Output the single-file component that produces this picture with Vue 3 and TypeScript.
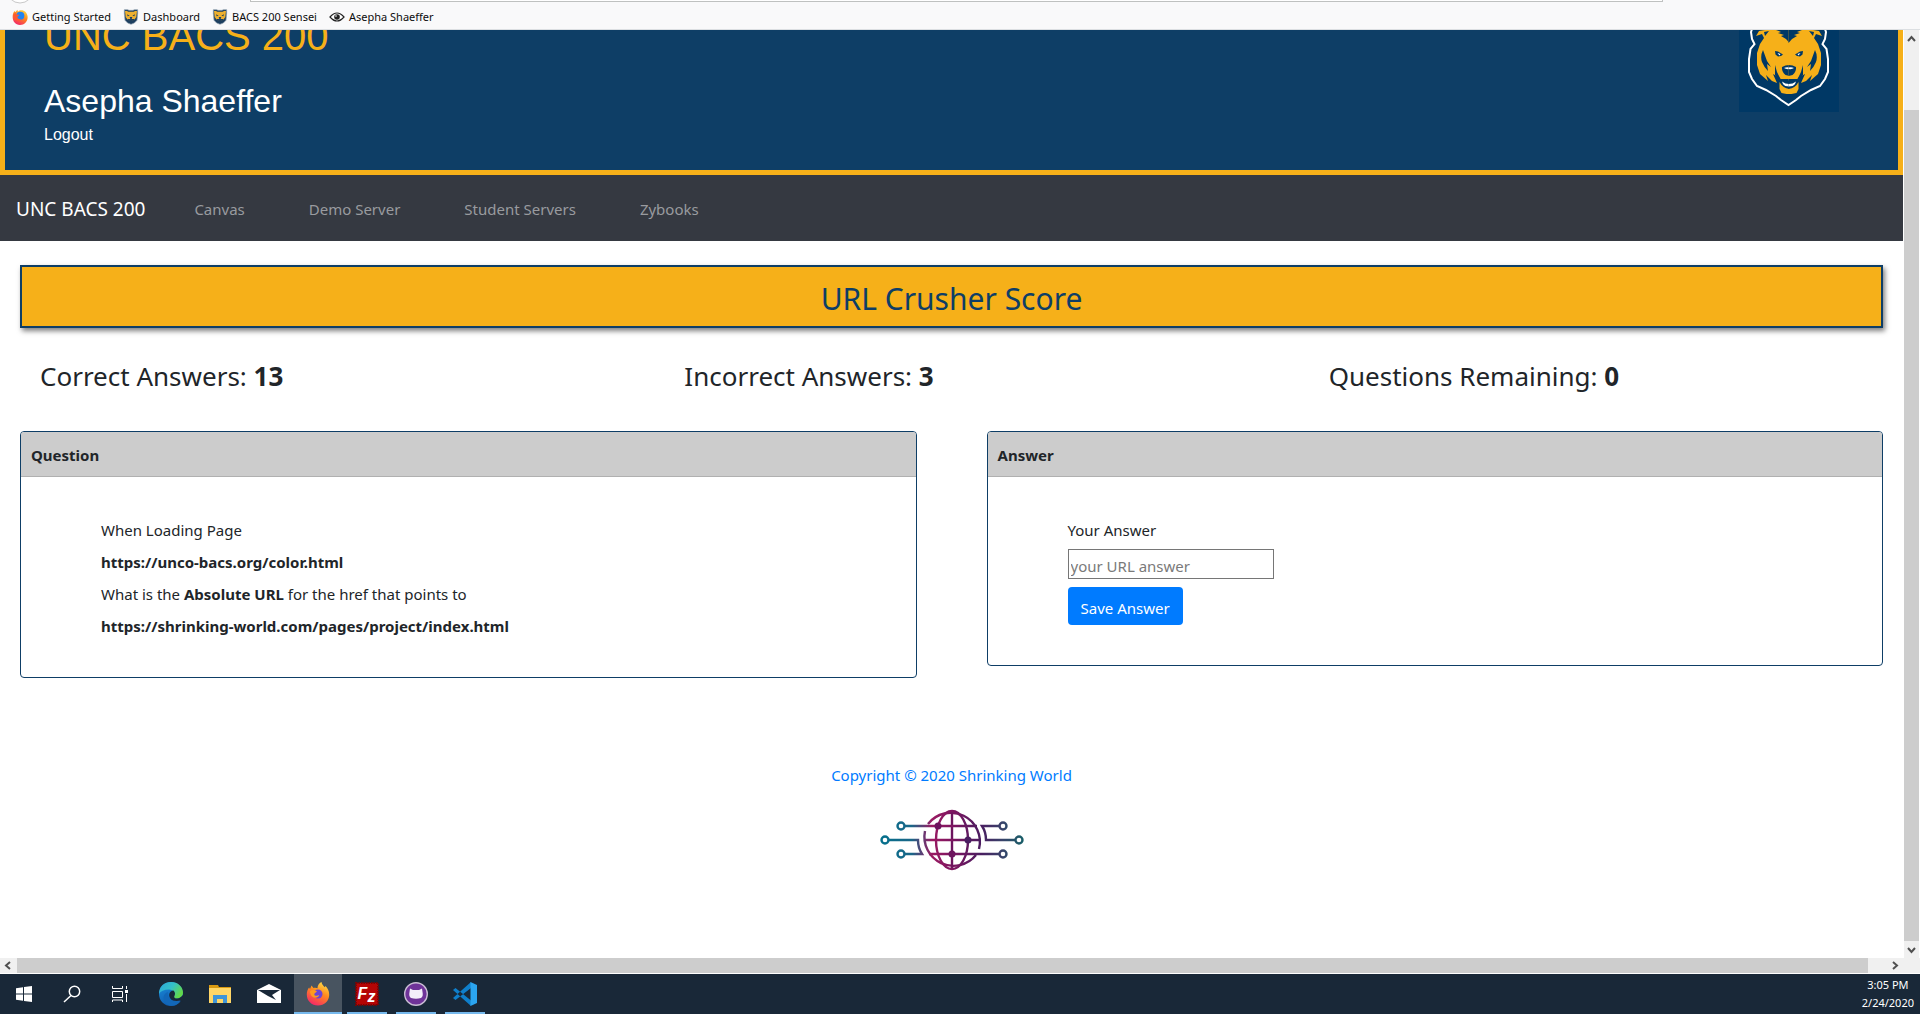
<script setup lang="ts">
import { ref } from 'vue'

interface Bookmark {
  label: string
  icon: 'firefox' | 'bear' | 'eye'
}

interface Stat {
  label: string
  value: number
}

const bookmarks: Bookmark[] = [
  { label: 'Getting Started', icon: 'firefox' },
  { label: 'Dashboard', icon: 'bear' },
  { label: 'BACS 200 Sensei', icon: 'bear' },
  { label: 'Asepha Shaeffer', icon: 'eye' },
]

const navLinks: string[] = ['Canvas', 'Demo Server', 'Student Servers', 'Zybooks']

const stats: Stat[] = [
  { label: 'Correct Answers:', value: 13 },
  { label: 'Incorrect Answers:', value: 3 },
  { label: 'Questions Remaining:', value: 0 },
]

const answer = ref('')
</script>

<template>
  <div class="desktop">
    <svg class="defs" aria-hidden="true">
      <defs>
        <linearGradient id="fox" x1="0.8" y1="0" x2="0.3" y2="1">
          <stop offset="0" stop-color="#ffe14a" />
          <stop offset="0.45" stop-color="#ff8a1c" />
          <stop offset="1" stop-color="#f4256a" />
        </linearGradient>
        <linearGradient id="edgeTop" x1="0" y1="0" x2="1" y2="0.5">
          <stop offset="0" stop-color="#2aa5dc" />
          <stop offset="0.55" stop-color="#35c1c8" />
          <stop offset="1" stop-color="#62d84a" />
        </linearGradient>
        <linearGradient id="edgeLow" x1="0" y1="0" x2="0.4" y2="1">
          <stop offset="0" stop-color="#1b8fdd" />
          <stop offset="1" stop-color="#0f5cb0" />
        </linearGradient>
        <linearGradient id="net" gradientUnits="userSpaceOnUse" x1="0" y1="0" x2="144" y2="0">
          <stop offset="0" stop-color="#04708c" />
          <stop offset="0.22" stop-color="#1a6688" />
          <stop offset="0.36" stop-color="#9a1a62" />
          <stop offset="0.52" stop-color="#7a1560" />
          <stop offset="0.7" stop-color="#4a1d60" />
          <stop offset="0.85" stop-color="#38436a" />
          <stop offset="1" stop-color="#175f68" />
        </linearGradient>
        <g id="halfBear">
          <path fill="#f6b019" d="M50.500 10H28l-2 8-6 1-3 5 6-2 2 4-4 6-3 9v12l3 9 8 7-2-6 6 6 5 2-4-9 7 4 2 3h7.500z" />
          <path fill="#003865" d="M24 38q-3 6-1 12 2 5 6 9l-1-7 4 3-4-6zM37 18l5 2-3 1 6 2-3 1 5 3 3.500 4V17l-3-3-4 4zM36 39l3 .5 5 3-2 1.500-3 .5-2.500-2zM43 55q3-2 7.500-2v11l-4-1q-4-3-3.500-8zM41 67h9.500v3H42zM25 20l5-1-4 5zM36 53l2 7 3 6v3l-5-6z" />
          <path fill="#003865" d="M40.500 68h10v9q-6 0-10-9z" />
          <path fill="#f6b019" d="M40.500 70q3 6 10 7v5h-3l-5-1-2-4z" />
          <path fill="#fff" d="M43 69.500q3 2.500 7.500 2.500v2.500q-5 0-6.500-2.500zM45 56q2 1.500 5.500 1v-1.500q-3-.8-5.500.5zM38.500 41l3 1-1 1.500z" />
        </g>
        <g id="bear">
          <path d="M14 14l-2 6 1 7 2.500 5-4 5-1.500 10v13l3 7 5 7 9 4 10 6 5 4 7.500 5 7.500-5 5-4 10-6 9-4 5-7 3-7V47l-1.500-10-4-5 2.500-5 1-7-2-6q-3-8-12-5l-8 3H35l-8-3q-9-3-13 5z" fill="#003865" stroke="#fff" stroke-width="2" />
          <use href="#halfBear" />
          <use href="#halfBear" transform="translate(100 0) scale(-1 1)" />
        </g>
        <g id="firefox">
          <path fill="url(#fox)" d="M12 23.500C5.500 23.500.8 18.800.8 12.500c0-3 1-5.500 2.300-7L4 7l1.500-3.500L7.500 6c1.500-.5 3-.3 4 .3C11.500 3.500 13 1 15.500 0c.3 2.500 2 3.800 3.300 5.300l.7-1.300c2.200 2.300 3.700 5 3.700 8.700 0 6.300-4.900 10.800-11.200 10.800z" />
          <circle cx="12" cy="12" r="4.500" fill="#6b45d6" />
          <path fill="#ff9a1f" d="M4 9c2-1.500 5-1.300 7 .5l-2.200 1.700c-1 .8-.5 2.500 1 2.600 1.500.1 2.300-.6 3.400-.6-.7 2.300-4.200 3.400-6.700 1.600C4.800 13.500 4 11.500 4 9z" />
        </g>
      </defs>
    </svg>

    <header class="browser-bar">
      <svg class="toolbar-edge" height="4" aria-hidden="true">
        <circle cx="20" cy="-10" r="13" fill="#fff" stroke="#c8c8c8" />
      </svg>
      <span class="address-edge"></span>
      <nav class="bookmarks" aria-label="Bookmarks">
        <a v-for="b in bookmarks" :key="b.label" href="#" class="bookmark">
          <svg v-if="b.icon === 'firefox'" width="16" height="16" viewBox="0 0 24 24">
            <path fill="url(#fox)" d="M12 24C5 24 1 18.500 1 12c0-4 1-7 3-9l1 2 3-4 1 3c5-5 14-1 14.500 8C23.500 19 18.500 24 12 24z" />
            <circle cx="12.500" cy="10" r="6" fill="#2384f0" />
            <path fill="#ff5a30" d="M2 9l3-4 1 3 5 1-3 3q0 4 6 3-3 4-8 2-4-1-4-8z" />
          </svg>
          <svg v-else-if="b.icon === 'bear'" width="16" height="16" viewBox="0 0 24 24">
            <path fill="#1d3f60" stroke="#8fa0ae" stroke-width="1" d="M2 1h5l2 1h6l2-1h5v6l-1 10-4 4-5 2-5-2-4-4L2 7z" />
            <path fill="#eeb02e" d="M3 3h3l2 1h8l2-1h3l-1 9-3 4-2 1H9l-2-1-3-4z" />
            <path fill="#1d3f60" d="M6 8l4 2-3 1zM18 8l-4 2 3 1zM10 12h4l-1 3h-2zM7 15h10v2l-5 1-5-1z" />
          </svg>
          <svg v-else width="16" height="16" viewBox="0 0 16 16">
            <path fill="#fff" stroke="#222" stroke-width="1.200" d="M1 8q7-8 14 0-7 8-14 0z" />
            <circle cx="8" cy="8" r="2.800" fill="#222" />
            <circle cx="7" cy="7" r="1" fill="#aaa" />
          </svg>
          <span>{{ b.label }}</span>
        </a>
      </nav>
    </header>

    <div class="window">
      <main class="page">
        <section class="masthead">
          <div>
            <h1>UNC BACS 200</h1>
            <h2>Asepha Shaeffer</h2>
            <a href="#" class="logout">Logout</a>
          </div>
          <svg class="logo" width="100" height="100" viewBox="0 0 100 100" role="img" aria-label="UNC Bears">
            <rect width="100" height="100" fill="#003865" />
            <use href="#bear" />
          </svg>
        </section>

        <nav class="navbar" aria-label="Course">
          <a href="#" class="brand">UNC BACS 200</a>
          <a v-for="link in navLinks" :key="link" href="#" class="nav-link">{{ link }}</a>
        </nav>

        <div class="content">
          <h2 class="banner">URL Crusher Score</h2>

          <div class="stats">
            <div v-for="s in stats" :key="s.label" class="stat">
              {{ s.label }} <strong>{{ s.value }}</strong>
            </div>
          </div>

          <div class="cards">
            <section class="card">
              <h3 class="card-title">Question</h3>
              <div class="card-body">
                <p>When Loading Page</p>
                <p><strong>https://unco-bacs.org/color.html</strong></p>
                <p>What is the <strong>Absolute URL</strong> for the href that points to</p>
                <p><strong>https://shrinking-world.com/pages/project/index.html</strong></p>
              </div>
            </section>

            <section class="card">
              <h3 class="card-title">Answer</h3>
              <form class="card-body" @submit.prevent>
                <label for="answer">Your Answer</label>
                <input id="answer" v-model="answer" type="text" placeholder="your URL answer" />
                <button type="submit">Save Answer</button>
              </form>
            </section>
          </div>
        </div>

        <footer class="footer">
          <a href="#">Copyright © 2020 Shrinking World</a>
          <svg width="144" height="64" viewBox="0 0 144 64" fill="none" stroke="url(#net)" stroke-width="2.400" role="img" aria-label="Shrinking World">
            <path d="M48 16a29 29 0 0 1 51 25M96 47a29 29 0 0 1-51-24" />
            <path d="M72 3v58" stroke="#6d145e" />
            <ellipse cx="72" cy="32" rx="16" ry="29" />
            <path d="M25 18.010H97M44 32.010h56M49 46.010h70" />
            <path d="M9 32.010H38q0 8 4 14H25M119 18.010h-17q4 6 4 14h29" />
            <g fill="#fff">
              <circle cx="21" cy="18" r="3.500" /><circle cx="5" cy="32" r="3.500" /><circle cx="21" cy="46" r="3.500" />
              <circle cx="123" cy="18" r="3.500" /><circle cx="139" cy="32" r="3.500" /><circle cx="123" cy="46" r="3.500" />
            </g>
            <g stroke="none">
              <circle cx="58" cy="18" r="3.500" fill="#6d145e" /><circle cx="88" cy="32" r="3.500" fill="#4a1d60" /><circle cx="72" cy="46" r="3.500" fill="#6d145e" />
            </g>
          </svg>
        </footer>
      </main>

      <div class="scroll-y" aria-hidden="true">
        <svg width="15" height="17" viewBox="0 0 15 17"><path d="M4 11l3.500-4L11 11" /></svg>
        <span class="thumb-y"></span>
        <svg width="15" height="17" viewBox="0 0 15 17"><path d="M4 7l3.500 4L11 7" /></svg>
      </div>
    </div>

    <div class="scroll-x" aria-hidden="true">
      <svg width="17" height="15" viewBox="0 0 17 15"><path d="M10 4L6 7.500 10 11" /></svg>
      <span class="thumb-x"></span>
      <svg width="17" height="15" viewBox="0 0 17 15"><path d="M7 4l4 3.500L7 11" /></svg>
    </div>

    <footer class="taskbar">
      <div class="tasks">
        <button type="button" aria-label="Start">
          <svg viewBox="0 0 24 24" fill="#fff"><path d="M4 6.200l7-1v6.300H4zM12 5l8-1v7.500h-8zM4 12.500h7v6.300l-7-1zM12 12.500h8V20l-8-1z" /></svg>
        </button>
        <button type="button" aria-label="Search">
          <svg viewBox="0 0 24 24" fill="none" stroke="#fff" stroke-width="1.500"><circle cx="14.500" cy="9.500" r="5.200" /><path d="M11 13.500L4 20" /></svg>
        </button>
        <button type="button" aria-label="Task View">
          <svg viewBox="0 0 24 24" fill="none" stroke="#fff"><path d="M4.500 4v2.500h10V4M4.500 9.500h10v6h-10zM4.500 20v-2h10v2M18.500 4v3M18.500 12v8" /><path fill="#fff" stroke="none" d="M17 8h3v3h-3z" /></svg>
        </button>
        <button type="button" class="first-app" aria-label="Edge">
          <svg viewBox="0 0 24 24">
            <circle cx="12" cy="12" r="12" fill="url(#edgeLow)" />
            <path fill="url(#edgeTop)" d="M0 12C0 4 5.500 0 12 0c7 0 12 5 12 10.500 0 4-3 6-6.500 6-3 0-3.500-1-2.500-2.500 1.500-3-1-6.500-5-6.500-5 0-8.500 1.500-10 4.500z" />
            <path fill="#192838" d="M14.500 8.500c2 2 1.800 4 .8 5.700-.8 1.300 1 2.500 3 2.300 2-.2 3.700-1.200 5.700-3.500V19l-3.500.5c-3 1-7.500 0-9.500-3.500-2-4 0-7 3.500-7.500z" />
            <path fill="#1267b8" d="M9 10c-1.500 5 3 10.500 12.500 8.500C17 26 8 25 5 19 3.500 14 6 10.500 9 10z" />
          </svg>
        </button>
        <button type="button" aria-label="File Explorer">
          <svg viewBox="0 0 24 24"><path fill="#d99a12" d="M1 3h9l1 2h12v5H1z" /><path fill="#ffd667" d="M1 6h22v15H1z" /><path fill="#3f95d8" d="M5 13h14v8h-4v-4H9v4H5z" /></svg>
        </button>
        <button type="button" aria-label="Mail">
          <svg viewBox="0 0 24 24"><path fill="#fff" d="M0 8l12-6 12 6v13H0z" /><path fill="#192838" d="M1 8h22l-8 5 4 5-8-4z" /></svg>
        </button>
        <button type="button" class="active" aria-label="Firefox">
          <svg viewBox="0 0 24 24"><use href="#firefox" /></svg>
        </button>
        <button type="button" class="running" aria-label="FileZilla">
          <svg viewBox="0 0 24 24">
            <rect x="1" y="1" width="22" height="22" fill="#b50505" stroke="#7c0303" stroke-width="2" stroke-dasharray="1.500 1" />
            <text x="11.500" y="17" text-anchor="middle" class="fz">F<tspan dy="3">z</tspan></text>
          </svg>
        </button>
        <button type="button" class="running" aria-label="GitHub Desktop">
          <svg viewBox="0 0 24 24"><circle cx="12" cy="12" r="11.300" fill="#6f3399" stroke="#c9bdd4" stroke-width="1.400" /><path fill="#f3effa" d="M6 6.500l3 1.500h6l3-1.500.5 3.500q1 4.500-1.500 6-5 1.500-10 0-2.500-1.500-1.500-6z" /></svg>
        </button>
        <button type="button" class="running" aria-label="Visual Studio Code">
          <svg viewBox="0 0 24 24"><path fill="#0f7fcb" d="M0 8l2.500-2L18 18.500V24zM0 16l2.500 2L18 6V0z" /><path fill="#2ba5f0" d="M17.500 0L24 3v18l-6.500 3z" /></svg>
        </button>
      </div>
      <div class="clock"><span>3:05 PM</span><span>2/24/2020</span></div>
    </footer>
  </div>
</template>

<style>
body {
  margin: 0;
}
</style>

<style scoped>
.desktop {
  display: flex;
  flex-direction: column;
  height: 100vh;
  overflow: hidden;
  background: #fff;
  color: #212529;
  font: 15px/32px "Noto Sans", "Open Sans", sans-serif;
}
.desktop * {
  box-sizing: border-box;
}
.defs {
  position: absolute;
  width: 0;
  height: 0;
}
h1,
h2,
h3,
p {
  margin: 0;
  font-weight: 400;
}
a {
  text-decoration: none;
}

.browser-bar {
  position: relative;
  flex: none;
  height: 30px;
  padding: 8px 12px 0;
  background: #f9f9fa;
  border-bottom: 1px solid #dcdfe2;
}
.toolbar-edge {
  position: absolute;
  left: 0;
  top: 0;
  width: 60px;
}
.address-edge {
  position: absolute;
  left: 250px;
  right: 257px;
  top: 0;
  height: 2px;
  background: #fff;
  border: 1px solid #bfc1c0;
  border-top: 0;
}
.bookmarks {
  display: flex;
  gap: 12px;
}
.bookmark {
  display: flex;
  align-items: center;
  gap: 4px;
  height: 18px;
  color: #0c0c0d;
  font-size: 11px;
  line-height: 18px;
}

.window {
  flex: 1;
  min-height: 0;
  display: flex;
}
.page {
  flex: 1;
  min-width: 0;
  overflow: hidden;
}
.masthead {
  display: flex;
  justify-content: space-between;
  margin-top: -47px;
  padding: 24px 59px 23px 39px;
  background: #0e3e66;
  border: 5px solid #f6b019;
  font-family: "Liberation Sans", Arial, sans-serif;
  color: #fff;
}
.masthead h1 {
  margin-bottom: 22px;
  color: #f6b019;
  font-size: 40px;
  line-height: 48px;
}
.masthead h2 {
  margin-bottom: 3px;
  font-size: 32px;
  line-height: 38px;
}
.logout {
  display: block;
  color: #fff;
  font-size: 16px;
  line-height: 24px;
}
.logo {
  flex: none;
}

.navbar {
  display: flex;
  align-items: center;
  gap: 64px;
  height: 66px;
  padding: 2px 16px 0;
  background: #353941;
}
.brand {
  margin-right: -15px;
  color: #fff;
  font-size: 19px;
}
.nav-link {
  color: #999b9f;
}

.content {
  padding: 24px 20px 0;
}
.banner {
  padding: 10px 8px 6px;
  background: #f6b019;
  border: 2px solid #0e3e66;
  box-shadow: 2px 3px 5px rgba(0, 0, 0, 0.5);
  color: #0e3e66;
  font-size: 30px;
  line-height: 43px;
  text-align: center;
}
.stats {
  display: grid;
  grid-template-columns: repeat(3, 1fr);
  gap: 70px;
  padding: 28px 0 35px 20px;
  margin-right: -20px;
  font-size: 26px;
  line-height: 40px;
}
.cards {
  display: flex;
  align-items: flex-start;
  gap: 70px;
}
.card {
  flex: 1;
  border: 1px solid #0e3e66;
  border-radius: 4px;
  overflow: hidden;
}
.card-title {
  padding: 7px 10px 5px;
  background: #ccc;
  border-bottom: 1px solid #b0b0b0;
  font-size: 15px;
  font-weight: 700;
}
.card-body {
  padding: 37px 80px 35px;
}
.card-body label,
.card-body input,
.card-body button {
  display: block;
}
.card-body input {
  width: 206px;
  height: 30px;
  margin: 3px 0 8px;
  padding: 3px 2px 0;
  border: 1px solid #767676;
  border-radius: 0;
  color: #212529;
  font: inherit;
  line-height: 24px;
}
.card-body input::placeholder {
  color: #7a7a7a;
}
.card-body button {
  height: 38px;
  margin-bottom: 5px;
  padding: 3px 13px 0;
  background: #007bff;
  border: 0;
  border-radius: 4px;
  color: #fff;
  font: inherit;
}
.footer {
  display: flex;
  flex-direction: column;
  align-items: center;
  gap: 17px;
  padding-top: 81px;
}
.footer a {
  color: #007bff;
}

.scroll-y {
  flex: none;
  display: flex;
  flex-direction: column;
  width: 17px;
  background: #f0f0f0;
  border: solid #fff;
  border-width: 0 1px;
}
.scroll-y svg,
.scroll-x svg {
  flex: none;
  fill: none;
  stroke: #505050;
  stroke-width: 2;
}
.thumb-y {
  flex: 1;
  margin-top: 63px;
  background: #cdcdcd;
}
.scroll-x {
  flex: none;
  display: flex;
  height: 16px;
  padding-right: 17px;
  background: #f0f0f0;
  border-bottom: 1px solid #fff;
}
.thumb-x {
  flex: 1;
  margin-right: 18px;
  background: #cdcdcd;
}

.taskbar {
  flex: none;
  display: flex;
  justify-content: space-between;
  height: 40px;
  background: #192838;
}
.tasks {
  display: flex;
}
.tasks button {
  display: flex;
  align-items: center;
  justify-content: center;
  width: 48px;
  padding: 0;
  background: none;
  border: 0;
}
.tasks button.first-app {
  margin-left: 3px;
}
.tasks .first-app ~ button {
  margin-left: 1px;
}
.tasks svg {
  width: 24px;
  height: 24px;
}
.tasks .active {
  background: linear-gradient(#76b9ed, #76b9ed) bottom / 100% 2px no-repeat #485460;
}
.tasks .running {
  background: linear-gradient(#76b9ed, #76b9ed) bottom / 40px 2px no-repeat;
}
.fz {
  fill: #fff;
  font: italic bold 16px "Liberation Sans", Arial, sans-serif;
}
.clock {
  display: flex;
  flex-direction: column;
  align-items: center;
  padding: 2px 6px 0;
  color: #fff;
  font-size: 11px;
  line-height: 18px;
}
</style>
